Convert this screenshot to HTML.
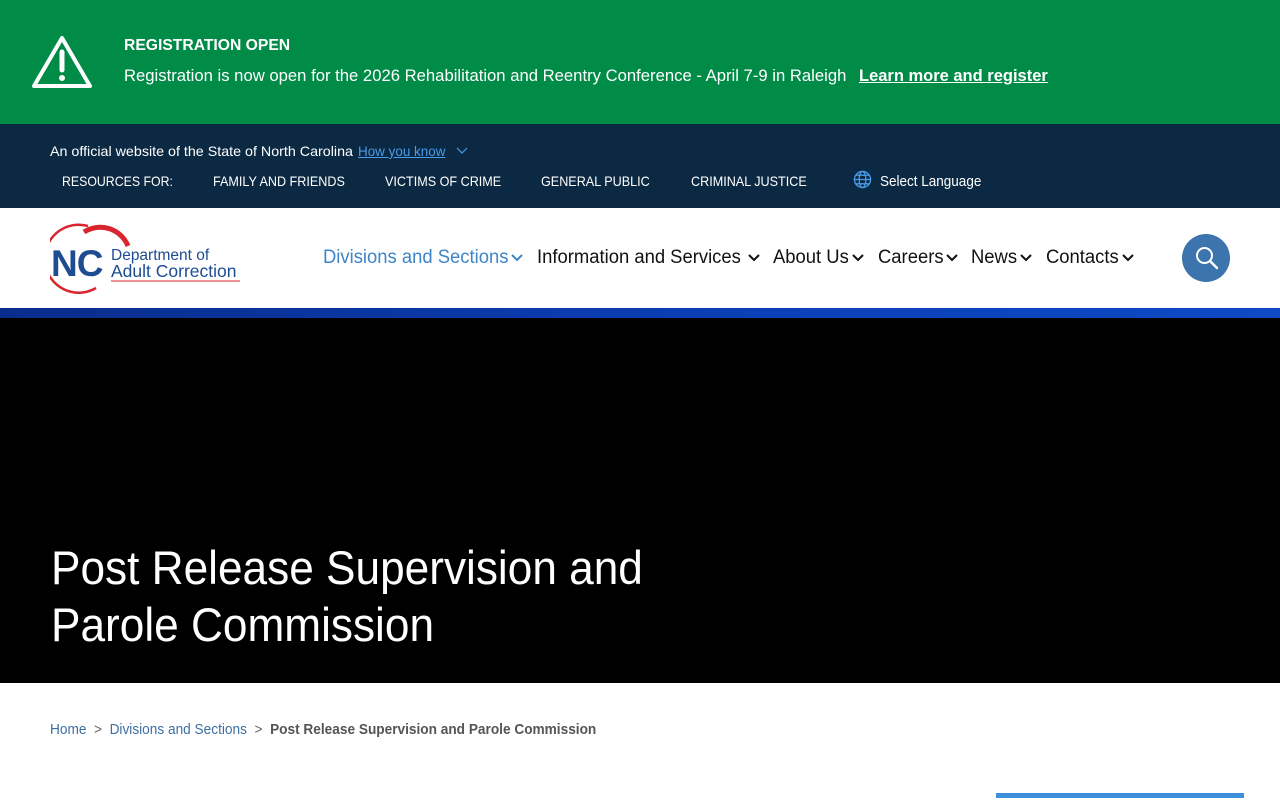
<!DOCTYPE html>
<html><head><meta charset="utf-8"><style>
*{margin:0;padding:0;box-sizing:border-box}
body{width:1280px;height:800px;overflow:hidden;font-family:"Liberation Sans",sans-serif;background:#fff;position:relative}
.a{position:absolute;white-space:nowrap}
.s{display:inline-block;transform-origin:left center}
</style></head><body>
<div class="a" style="left:0;top:0;width:1280px;height:124px;background:#008b47"></div>
<svg class="a" style="left:30px;top:34px" width="64" height="56" viewBox="0 0 64 56"><path d="M32 4 L60 52 L4 52 Z" fill="none" stroke="#fff" stroke-width="4" stroke-linejoin="round"/><path d="M32 18 V36" stroke="#fff" stroke-width="5" stroke-linecap="round"/><circle cx="32" cy="44" r="3" fill="#fff"/></svg>
<div class="a" style="left:124px;top:37px;color:#fff;font-weight:bold;font-size:16px"><span class="s" style="transform:scaleX(.98)">REGISTRATION OPEN</span></div>
<div class="a" style="left:124px;top:66px;color:#fff;font-size:17px"><span class="s" style="transform:scaleX(.98)">Registration is now open for the 2026 Rehabilitation and Reentry Conference - April 7-9 in Raleigh</span></div>
<div class="a" style="left:859px;top:66px;color:#fff;font-size:17px;font-weight:bold"><span class="s" style="transform:scaleX(.97);text-decoration:underline">Learn more and register</span></div>

<div class="a" style="left:0;top:124px;width:1280px;height:84px;background:#0b2942"></div>
<div class="a" style="left:50px;top:143px;color:#fff;font-size:14px"><span class="s" style="transform:scaleX(1.02)">An official website of the State of North Carolina</span></div>
<div class="a" style="left:358px;top:143px;color:#4a9be8;font-size:14px"><span class="s" style="transform:scaleX(.96);text-decoration:underline">How you know</span></div>
<svg class="a" style="left:456px;top:146px" width="12" height="10"><path d="M1 2 L6 7 L11 2" fill="none" stroke="#4a9be8" stroke-width="1.2"/></svg>
<div class="a" style="left:62px;top:173px;color:#fff;font-size:14px"><span class="s" style="transform:scaleX(.88)">RESOURCES FOR:</span></div>
<div class="a" style="left:213px;top:173px;color:#fff;font-size:14px"><span class="s" style="transform:scaleX(.9)">FAMILY AND FRIENDS</span></div>
<div class="a" style="left:385px;top:173px;color:#fff;font-size:14px"><span class="s" style="transform:scaleX(.9)">VICTIMS OF CRIME</span></div>
<div class="a" style="left:541px;top:173px;color:#fff;font-size:14px"><span class="s" style="transform:scaleX(.9)">GENERAL PUBLIC</span></div>
<div class="a" style="left:691px;top:173px;color:#fff;font-size:14px"><span class="s" style="transform:scaleX(.9)">CRIMINAL JUSTICE</span></div>
<svg class="a" style="left:853px;top:170px" width="19" height="19" viewBox="0 0 20 20"><g fill="none" stroke="#4a9be8" stroke-width="1.4"><circle cx="10" cy="10" r="8.5"/><ellipse cx="10" cy="10" rx="3.5" ry="8.5"/><path d="M1.5 10H18.5M3 5.5H17M3 14.5H17"/></g></svg>
<div class="a" style="left:880px;top:173px;color:#fff;font-size:15px"><span class="s" style="transform:scaleX(.9)">Select Language</span></div>

<svg class="a" style="left:50px;top:220px" width="195" height="76" viewBox="0 0 195 76"><path d="M38 6 A34 34 0 1 0 46 68" fill="none" stroke="#d9262e" stroke-width="2.5"/><path d="M34 12 A30 30 0 0 1 78 26" fill="none" stroke="#d9262e" stroke-width="5"/><text x="1" y="56" font-family="Liberation Sans" font-weight="bold" font-size="37" fill="#1d4c91" letter-spacing="-1">NC</text><text x="61" y="40" font-family="Liberation Sans" font-size="15.5" fill="#1d4c91">Department of</text><text x="61" y="57" font-family="Liberation Sans" font-size="17.5" fill="#1d4c91">Adult Correction</text><path d="M61 61H190" stroke="#d9262e" stroke-width="1"/></svg>

<div class="a" style="left:323px;top:247px;color:#3d84c9;font-size:19px"><span class="s" style="transform:scaleX(.97)">Divisions and Sections</span></div>
<div class="a" style="left:537px;top:247px;color:#111;font-size:19px"><span class="s" style="transform:scaleX(.97)">Information and Services</span></div>
<div class="a" style="left:773px;top:247px;color:#111;font-size:19px"><span class="s" style="transform:scaleX(.97)">About Us</span></div>
<div class="a" style="left:878px;top:247px;color:#111;font-size:19px"><span class="s" style="transform:scaleX(.97)">Careers</span></div>
<div class="a" style="left:971px;top:247px;color:#111;font-size:19px"><span class="s" style="transform:scaleX(.97)">News</span></div>
<div class="a" style="left:1046px;top:247px;color:#111;font-size:19px"><span class="s" style="transform:scaleX(.97)">Contacts</span></div>
<svg class="a" style="left:0;top:0" width="1280" height="300"><g fill="none" stroke-width="2"><path d="M512 255l5 5 5-5" stroke="#3d84c9"/><g stroke="#111"><path d="M749 255l5 5 5-5M853 255l5 5 5-5M947 255l5 5 5-5M1021 255l5 5 5-5M1123 255l5 5 5-5"/></g></g></svg>
<div class="a" style="left:1182px;top:234px;width:48px;height:48px;border-radius:50%;background:#3c74ad"></div>
<svg class="a" style="left:1194px;top:245px" width="26" height="26" viewBox="0 0 26 26"><circle cx="10.5" cy="10.5" r="7.5" fill="none" stroke="#fff" stroke-width="2"/><path d="M16 16l7 7" stroke="#fff" stroke-width="2.4" stroke-linecap="round"/></svg>

<div class="a" style="left:0;top:308px;width:1280px;height:10px;background:linear-gradient(90deg,#0a2d8c,#0b40b8 60%,#0e4ac4)"></div>
<div class="a" style="left:0;top:318px;width:1280px;height:365px;background:#000"></div>
<div class="a" style="left:51px;top:539px;color:#fff;font-size:47px;line-height:57px"><span class="s" style="transform:scaleX(.94)">Post Release Supervision and<br>Parole Commission</span></div>

<div class="a" style="left:50px;top:721px;font-size:15px;color:#3d6fa3"><span class="s" style="transform:scaleX(.91)">Home <span style="color:#666">&nbsp;&gt;&nbsp;</span> Divisions and Sections <span style="color:#666">&nbsp;&gt;&nbsp;</span> <span style="color:#555;font-weight:bold">Post Release Supervision and Parole Commission</span></span></div>
<div class="a" style="left:996px;top:793px;width:248px;height:5px;background:#3d8fdc"></div>
</body></html>
